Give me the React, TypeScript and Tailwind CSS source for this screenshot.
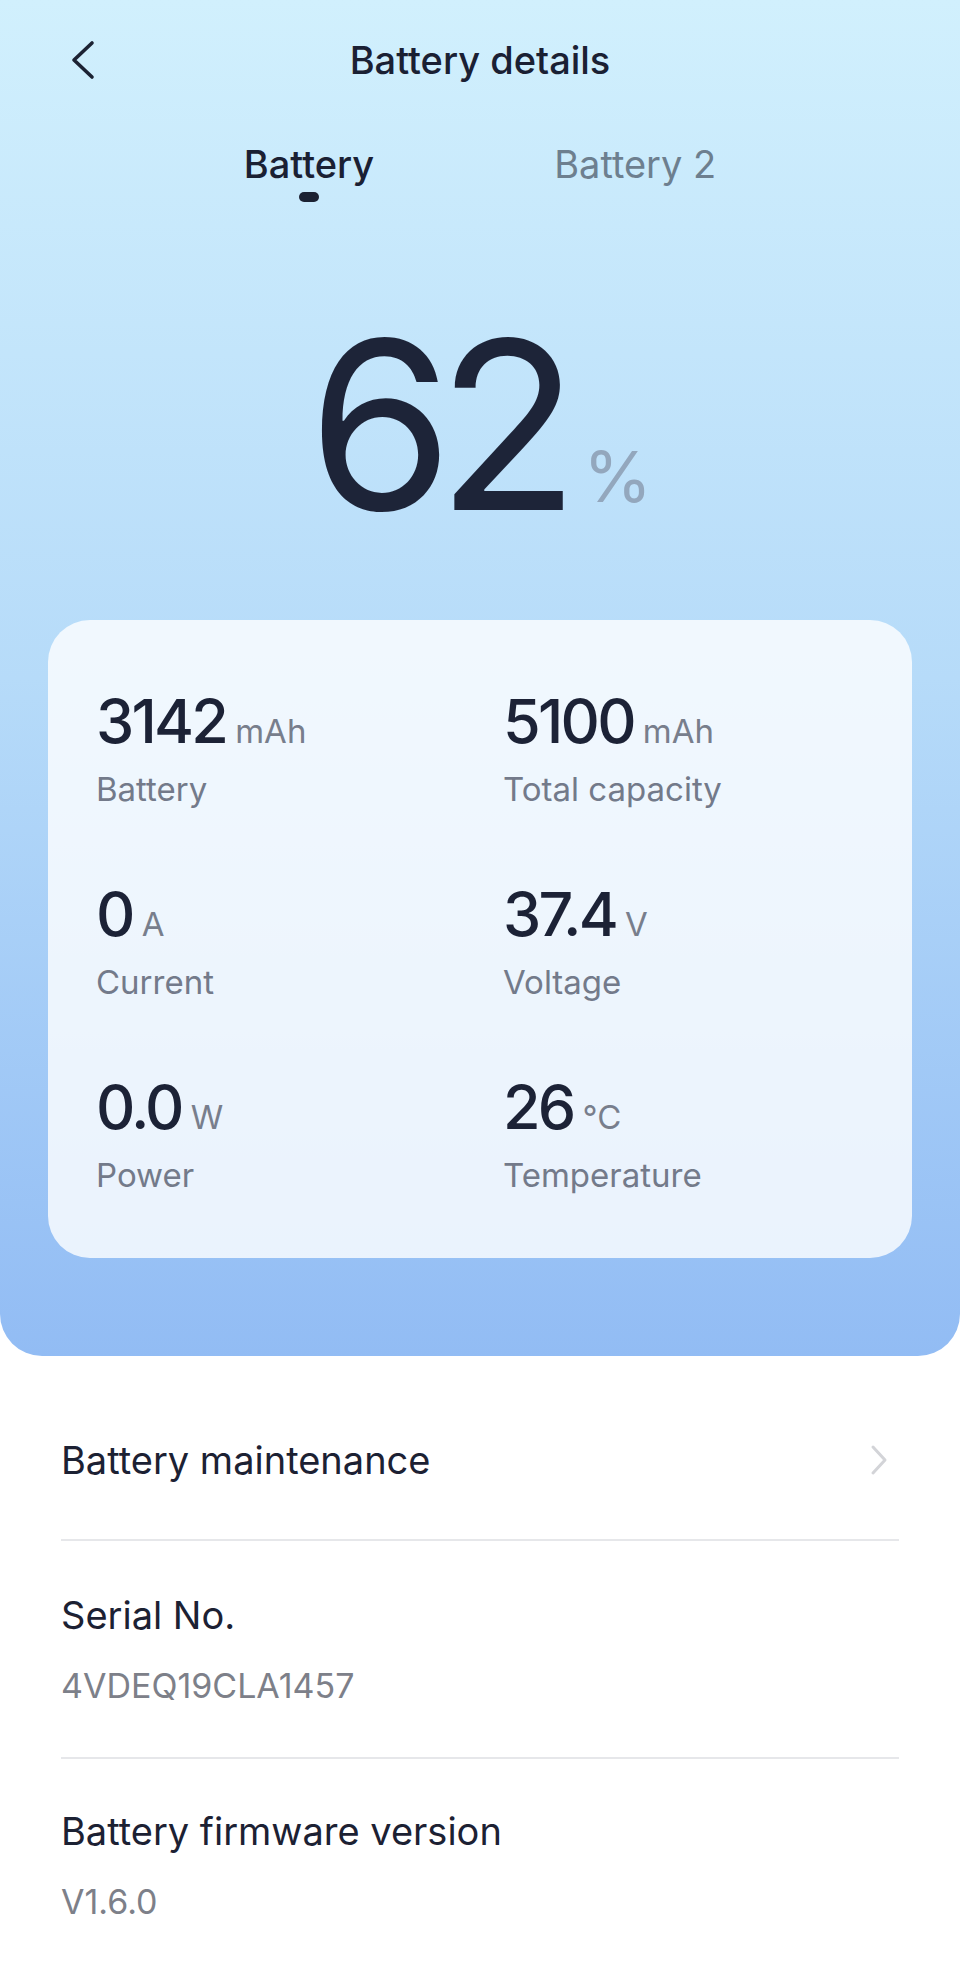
import type { ReactNode } from 'react'

const font = { fontFamily: 'Inter, "Noto Sans", sans-serif' }

const stats = [
  { value: '3142', unit: 'mAh', label: 'Battery' },
  { value: '5100', unit: 'mAh', label: 'Total capacity' },
  { value: '0', unit: 'A', label: 'Current' },
  { value: '37.4', unit: 'V', label: 'Voltage' },
  { value: '0.0', unit: 'W', label: 'Power' },
  { value: '26', unit: '°C', label: 'Temperature' },
]

function Stat({ value, unit, label }: { value: string; unit: string; label: string }) {
  return (
    <div className="flex flex-col">
      <div className="flex h-[62px] items-baseline gap-[9px]">
        <span className="text-[61px] leading-[62px] tracking-[-0.045em] font-medium text-[#1c2236]">{value}</span>
        <span className="text-[33px] leading-none text-[#787e8c]">{unit}</span>
      </div>
      <span className="mt-[16px] text-[33px] leading-[42px] text-[#737a8a]">{label}</span>
    </div>
  )
}

function InfoRow({ title, value, children }: { title: string; value?: string; children?: ReactNode }) {
  return (
    <div className="flex items-start justify-between">
      <div className="flex flex-col">
        <span className="text-[38px] leading-[44px] text-[#1c2133]">{title}</span>
        {value && <span className="mt-[29px] text-[34px] leading-[40px] text-[#7d8089]">{value}</span>}
      </div>
      {children}
    </div>
  )
}

export default function App() {
  return (
    <div className="min-h-[1970px] w-[960px] bg-white" style={font}>
      <header className="rounded-b-[42px] bg-gradient-to-b from-[#d1f0fd] via-[#b6dbf9] to-[#92bcf4] pb-[98px]">
        <div className="grid grid-cols-[1fr_auto_1fr] items-center pt-[36px] h-[84px]">
          <div className="pl-[67px]">
            <svg width="30" height="40" viewBox="0 0 30 40" fill="none">
              <path d="M25 3 L7 20 L25 37" stroke="#1c2233" strokeWidth="3.6" strokeLinecap="round" strokeLinejoin="round" />
            </svg>
          </div>
          <h1 className="text-[38px] leading-[48px] font-medium text-[#1a2033]">Battery details</h1>
          <div />
        </div>

        <div className="mt-[57px] flex justify-center gap-[180px]">
          <div className="flex flex-col items-center">
            <span className="text-[38px] leading-[46px] font-medium text-[#1a2033]">Battery</span>
            <span className="mt-[5px] h-[10px] w-[20px] rounded-full bg-[#1c2233]" />
          </div>
          <div className="flex flex-col items-center">
            <span className="text-[38px] leading-[46px] text-[#6d7f8f]">Battery 2</span>
          </div>
        </div>

        <div className="mt-[106px] flex items-baseline justify-center gap-[20px]">
          <span className="text-[234px] leading-[234px] tracking-[-0.07em] font-normal text-[#1d2438]">62</span>
          <span className="-translate-y-[8px] text-[70px] leading-[70px] text-[#93a7bd]">%</span>
        </div>

        <section className="mx-[48px] mt-[78px] rounded-[42px] bg-white/80 pt-[70px] pb-[62px] px-[48px]">
          <div className="grid grid-cols-2 gap-x-[46px] gap-y-[73px]">
            {stats.map((s) => (
              <Stat key={s.label} {...s} />
            ))}
          </div>
        </section>
      </header>

      <div className="mx-[61px]">
        <div className="pt-[82px] pb-[57px] border-b-2 border-[#e6e7ea]">
          <InfoRow title="Battery maintenance">
            <svg className="mr-[10px] mt-[6px]" width="20" height="32" viewBox="0 0 20 32" fill="none">
              <path d="M4 3 L16 16 L4 29" stroke="#d3d4d8" strokeWidth="3" strokeLinecap="round" strokeLinejoin="round" />
            </svg>
          </InfoRow>
        </div>
        <div className="pt-[52px] pb-[51px] border-b-2 border-[#e6e7ea]">
          <InfoRow title="Serial No." value="4VDEQ19CLA1457" />
        </div>
        <div className="pt-[50px] pb-[40px]">
          <InfoRow title="Battery firmware version" value="V1.6.0" />
        </div>
      </div>
    </div>
  )
}
